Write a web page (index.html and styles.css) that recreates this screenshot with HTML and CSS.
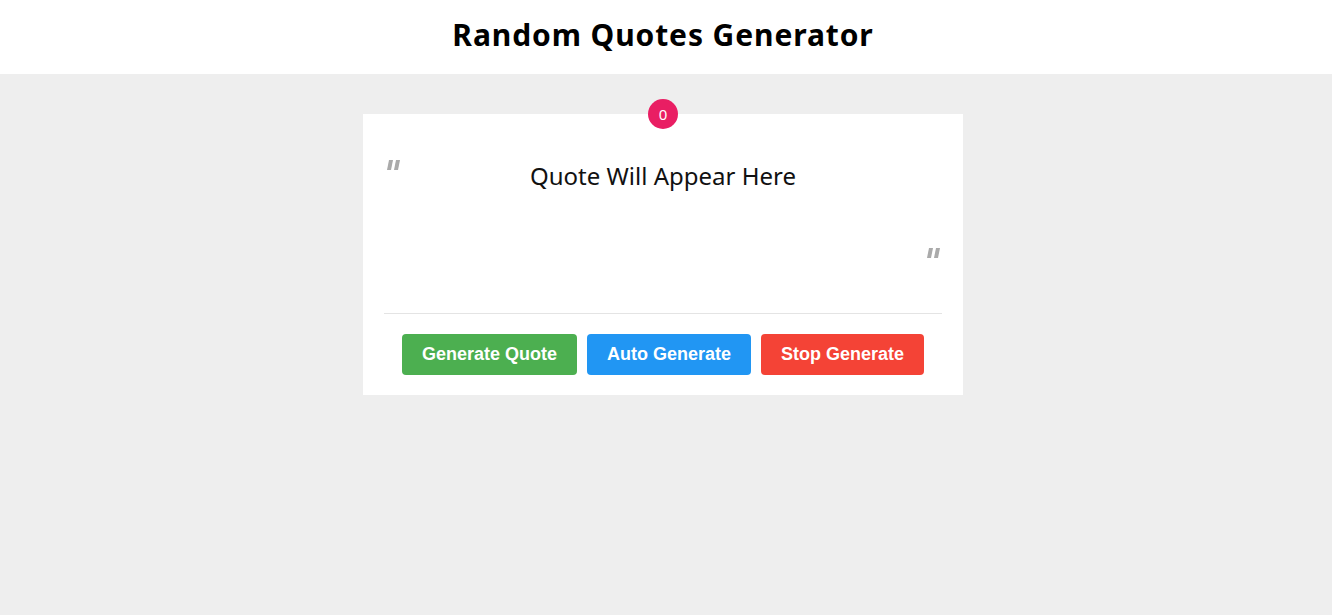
FILE: index.html
```html
<!DOCTYPE html>
<html lang="en">
<head>
<meta charset="utf-8">
<title>Random Quotes Generator</title>
<link rel="stylesheet" href="styles.css">
</head>
<body>
<header class="topbar">
  <h1 class="title">Random Quotes Generator</h1>
</header>
<main class="main">
  <section class="card">
    <span class="badge">0</span>
    <div class="quote-box">
      <svg class="qmark qleft" viewBox="0 0 15 10" width="15" height="10" aria-hidden="true">
        <polygon points="3,0 7,0 5,10 1,10" fill="#aaa"/>
        <polygon points="10,0 14,0 12,10 8,10" fill="#aaa"/>
      </svg>
      <p class="quote-text">Quote Will Appear Here</p>
      <svg class="qmark qright" viewBox="0 0 15 10" width="15" height="10" aria-hidden="true">
        <polygon points="3,0 7,0 5,10 1,10" fill="#aaa"/>
        <polygon points="10,0 14,0 12,10 8,10" fill="#aaa"/>
      </svg>
    </div>
    <div class="actions">
      <button class="btn btn-green">Generate Quote</button>
      <button class="btn btn-blue">Auto Generate</button>
      <button class="btn btn-red">Stop Generate</button>
    </div>
  </section>
</main>
</body>
</html>
```
FILE: styles.css
```css
* { box-sizing: border-box; }
html, body { margin: 0; padding: 0; }
body {
  background: #eeeeee;
  font-family: "Noto Sans", "Open Sans", sans-serif;
  min-height: 615px;
}
.topbar {
  background: #ffffff;
  height: 74px;
  display: flex;
  align-items: center;
  justify-content: center;
  padding-right: 6px;
}
.title {
  margin: -5px 0 0 0;
  font-family: "Noto Sans", sans-serif;
  font-weight: 700;
  font-size: 30px;
  color: #000;
  letter-spacing: 0.9px;
}
.main {
  display: flex;
  justify-content: center;
  padding-top: 40px;
  padding-right: 6px;
}
.card {
  position: relative;
  width: 600px;
  background: #fff;
  padding: 40px 21px 20px 21px;
}
.badge {
  position: absolute;
  top: -15px;
  left: 285px;
  width: 30px;
  height: 30px;
  border-radius: 50%;
  background: #e91e63;
  color: #fff;
  font-size: 15px;
  line-height: 30px;
  text-align: center;
  font-family: "Noto Sans", sans-serif;
}
.quote-box {
  display: grid;
  grid-template-columns: 20px 1fr 20px;
  padding-bottom: 55px;
  border-bottom: 1px solid #e4e4e4;
}
.qmark { display: block; }
.qleft {
  grid-column: 1;
  grid-row: 1;
  margin-top: 6px;
  margin-left: 2px;
}
.quote-text {
  grid-column: 2;
  grid-row: 1;
  margin: 0;
  padding-top: 4px;
  text-align: center;
  font-size: 24px;
  line-height: 36px;
  color: #111;
}
.qright {
  grid-column: 3;
  grid-row: 2;
  justify-self: end;
  margin-top: 54px;
  margin-right: 1px;
}
.actions {
  display: flex;
  justify-content: center;
  gap: 10px;
  margin-top: 20px;
}
.btn {
  border: none;
  border-radius: 4px;
  height: 41px;
  padding: 0 20px;
  color: #fff;
  font-family: "Liberation Sans", Arial, sans-serif;
  font-weight: 700;
  font-size: 18px;
  cursor: pointer;
}
.btn-green { background: #4caf50; }
.btn-blue { background: #2196f3; }
.btn-red { background: #f44336; }
```
